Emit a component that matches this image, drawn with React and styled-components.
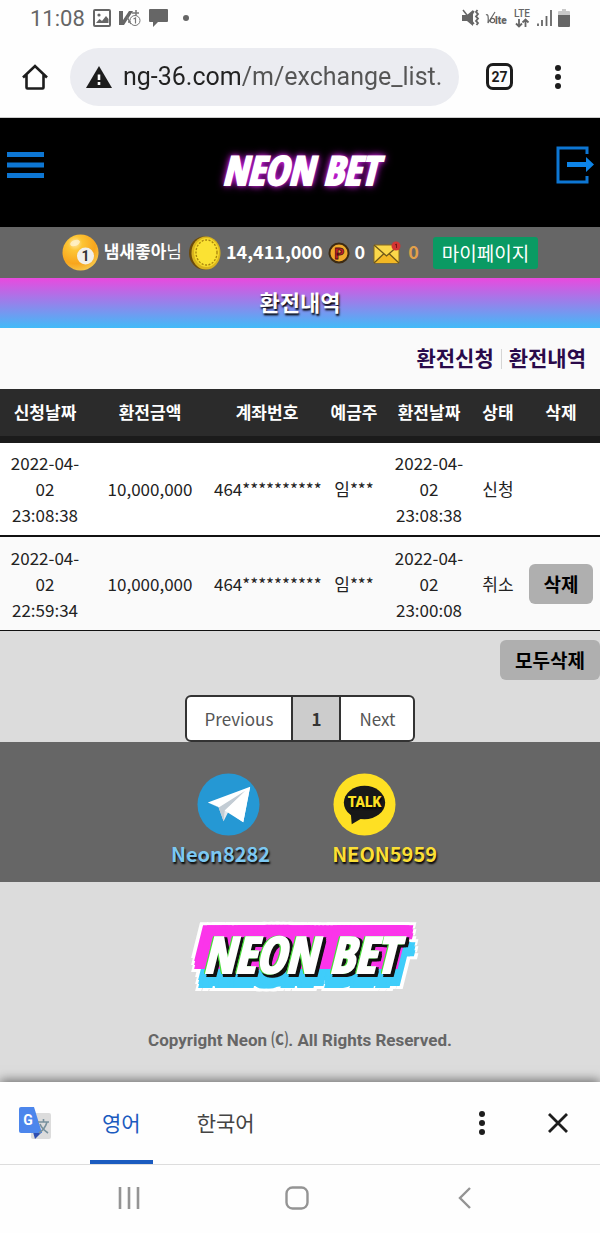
import styled, { createGlobalStyle } from "styled-components";

const rows = [
    { id: 1, date: "2022-04-02 23:08:38", amount: "10,000,000", account: "464**********", owner: "임***", done: "2022-04-02 23:08:38", status: "신청", removable: false },
    { id: 2, date: "2022-04-02 22:59:34", amount: "10,000,000", account: "464**********", owner: "임***", done: "2022-04-02 23:00:08", status: "취소", removable: true },
];

const columns = [
    { label: "신청날짜", width: "15%" },
    { label: "환전금액", width: "20%" },
    { label: "계좌번호", width: "19%" },
    { label: "예금주", width: "10%" },
    { label: "환전날짜", width: "15%" },
    { label: "상태", width: "8%" },
    { label: "삭제", width: "13%" },
];

// solid copy of the text, moved by x/y and fattened by r
const layer = (x, y, r, color) =>
    [[0, 0], [-r, 0], [r, 0], [0, -r], [0, r], [-r, -r], [r, -r], [-r, r], [r, r]]
        .map(([dx, dy]) => `${x + dx}px ${y + dy}px 0 ${color}`)
        .join(", ");

const App = () => {
    return (
        <Screen>
            <GlobalStyle />
            <StatusBar />
            <BrowserBar />
            <SiteHeader />
            <UserBar />
            <Main>
                <Title>환전내역</Title>
                <SubNav>
                    <a href="#exchange">환전신청</a>
                    <Divider />
                    <a href="#list">환전내역</a>
                </SubNav>
                <HistoryTable />
                <Actions>
                    <GreyButton type="button">모두삭제</GreyButton>
                </Actions>
                <Pagination>
                    <PageButton type="button">Previous</PageButton>
                    <PageButton type="button" $active>1</PageButton>
                    <PageButton type="button">Next</PageButton>
                </Pagination>
            </Main>
            <Contacts />
            <Footer>
                <FooterLogo>NEON BET</FooterLogo>
                <Copyright>Copyright Neon ⒞. All Rights Reserved.</Copyright>
            </Footer>
            <TranslateBar />
            <PhoneNav />
        </Screen>
    );
};

const StatusBar = () => (
    <Status>
        <Clock>11:08</Clock>
        <svg width="18" height="18" viewBox="0 0 18 18">
            <rect x="1" y="1" width="16" height="16" rx="1" fill="none" stroke="#666" strokeWidth="2" />
            <circle cx="6" cy="6" r="1.6" fill="#666" />
            <path d="M3 14l3.5-4 2.5 2 4-5 2.5 3v4z" fill="#666" />
        </svg>
        <svg width="22" height="18" viewBox="0 0 22 18">
            <path d="M0 2h4v9l6-9h4L5 16H0z" fill="#666" />
            <path d="M13 4h7M17 1v6M8 8l4 7M9 13h4" stroke="#777" strokeWidth="1.5" fill="none" />
            <circle cx="16" cy="11.500" r="5" fill="#fff" stroke="#777" />
            <path d="M14.500 10l2-1v5.500" stroke="#777" strokeWidth="1.200" fill="none" />
        </svg>
        <svg width="19" height="18" viewBox="0 0 19 18">
            <path d="M1 0h17a1 1 0 0 1 1 1v11a1 1 0 0 1-1 1H9l-5 5v-5H1a1 1 0 0 1-1-1V1a1 1 0 0 1 1-1z" fill="#666" />
        </svg>
        <Dot />
        <Signals>
            <svg width="19" height="18" viewBox="0 0 19 18">
                <path d="M1 6h5l6-5v16l-6-5H1z" fill="#666" />
                <path d="M2 1l11 14" stroke="#666" strokeWidth="1.500" />
                <path d="M10 7l3-5" stroke="#666" strokeWidth="1.500" />
                <path d="M16.500 1l-1.500 2 2 2-2 2.500 2 2-2 2.500 2 2-1.500 2" fill="none" stroke="#666" strokeWidth="1.800" />
            </svg>
            <svg width="23" height="18" viewBox="0 0 23 18">
                <path d="M1 6q3-2 2 8L10 3" fill="none" stroke="#666" strokeWidth="1.200" />
                <circle cx="7.500" cy="11.500" r="2.200" fill="none" stroke="#666" strokeWidth="1.200" />
                <text x="10" y="15" fontFamily="Roboto, sans-serif" fontWeight="900" fontSize="10" fill="#666">lte</text>
            </svg>
            <svg width="18" height="20" viewBox="0 0 18 20">
                <text x="9" y="9" textAnchor="middle" fontFamily="Roboto, sans-serif" fontWeight="500" fontSize="10" fill="#666">LTE</text>
                <path d="M6 11v7M3 15.500l3 3 3-3M12.500 19v-7M9.500 14.500l3-3 3 3" fill="none" stroke="#666" strokeWidth="1.800" />
            </svg>
            <svg width="17" height="18" viewBox="0 0 17 18">
                <path d="M2 14.500V17M6 11v6M10.500 7v10M15 1v16" stroke="#666" strokeWidth="1.800" />
            </svg>
            <svg width="12" height="18" viewBox="0 0 12 18">
                <path d="M4 0h4v2h3a1 1 0 0 1 1 1v4H0V3a1 1 0 0 1 1-1h3z" fill="#c9c9c9" />
                <path d="M0 6h12v11a1 1 0 0 1-1 1H1a1 1 0 0 1-1-1z" fill="#666" />
            </svg>
        </Signals>
    </Status>
);

const BrowserBar = () => (
    <Browser>
        <IconButton type="button" aria-label="Home">
            <svg width="28" height="28" viewBox="0 0 28 28" fill="none" stroke="#1d1d1d" strokeWidth="2.600">
                <path d="M2 14.500L14 3l12 11.500M5.500 12v12.500a1 1 0 0 0 1 1h15a1 1 0 0 0 1-1V12" />
            </svg>
        </IconButton>
        <Address>
            <svg width="26" height="24" viewBox="0 0 26 24">
                <path d="M13 1l13 22H0z" fill="#1d1d1d" />
                <path d="M13 9.500v5.500M13 17v3" stroke="#fff" strokeWidth="2.600" />
            </svg>
            <AddressInput type="text" aria-label="Address" defaultValue="ng-36.com/m/exchange_list." />
        </Address>
        <TabCount type="button">27</TabCount>
        <IconButton type="button" aria-label="Menu">
            <MoreIcon />
        </IconButton>
    </Browser>
);

const MoreIcon = () => (
    <svg width="28" height="28" viewBox="0 0 28 28" fill="#1d1d1d">
        <circle cx="14" cy="5" r="3" />
        <circle cx="14" cy="14" r="3" />
        <circle cx="14" cy="23" r="3" />
    </svg>
);

const SiteHeader = () => (
    <Header>
        <IconButton type="button" aria-label="메뉴">
            <svg width="38" height="28" viewBox="0 0 38 28" fill="#0d76d3">
                <path d="M1 1h37v5H1zM1 11.500h37v5H1zM1 22h37v5H1z" />
            </svg>
        </IconButton>
        <HeaderLogo href="#home">NEON BET</HeaderLogo>
        <IconButton type="button" aria-label="로그아웃">
            <svg width="38" height="38" viewBox="0 0 38 38">
                <path d="M31 8V2H2v34h29v-6" fill="none" stroke="#0d76d3" strokeWidth="3" />
                <path d="M11 16h19v-5l8 7.500-8 7.500v-5H11z" fill="#0d84e8" />
            </svg>
        </IconButton>
    </Header>
);

const UserBar = () => (
    <User>
        <svg width="37" height="37" viewBox="0 0 37 37">
            <defs>
                <radialGradient id="ball" cx="0.35" cy="0.25" r="0.8">
                    <stop offset="0" stopColor="#ffe9a8" />
                    <stop offset="0.25" stopColor="#fdc534" />
                    <stop offset="0.7" stopColor="#f8a51d" />
                    <stop offset="1" stopColor="#f7c94c" />
                </radialGradient>
            </defs>
            <circle cx="18.500" cy="18.500" r="18" fill="url(#ball)" />
            <ellipse cx="13" cy="9" rx="5" ry="3" fill="#fff3cf" opacity="0.8" transform="rotate(-20 13 9)" />
            <circle cx="23.500" cy="22" r="8.500" fill="#f1efe9" />
            <text x="23.500" y="27" textAnchor="middle" fontFamily="Roboto, sans-serif" fontWeight="700" fontSize="14" fill="#333">1</text>
        </svg>
        <Name><b>냄새좋아</b>님</Name>
        <svg width="32" height="36" viewBox="0 0 32 36">
            <ellipse cx="15" cy="18" rx="15" ry="16.500" fill="#6b4a0c" />
            <ellipse cx="17" cy="18" rx="14.500" ry="16.500" fill="#d9b41e" />
            <ellipse cx="17.500" cy="17.500" rx="12.500" ry="14.500" fill="#f5d92b" />
            <ellipse cx="17.500" cy="17.500" rx="10.500" ry="12.500" fill="#fbe233" stroke="#a8830f" strokeWidth="1.300" strokeDasharray="2 1.500" />
        </svg>
        <Amount>14,411,000</Amount>
        <svg width="22" height="22" viewBox="0 0 22 22">
            <circle cx="11" cy="11" r="9.500" fill="#f0a92c" stroke="#3d2a12" strokeWidth="2" />
            <text x="11.500" y="16.500" textAnchor="middle" fontFamily="Roboto, sans-serif" fontWeight="900" fontSize="15" fill="#c8202a" stroke="#4a1014" strokeWidth="0.800">P</text>
        </svg>
        <Amount>0</Amount>
        <MailIcon width="28" height="24" viewBox="0 0 28 24">
            <rect x="1" y="4" width="25" height="18" rx="1" fill="#fbd84a" stroke="#8a6a1c" />
            <path d="M1 22l10-9 2.500 2 2.500-2 10 9z" fill="#f3b824" />
            <path d="M1 4l12.500 11L26 4M1 22l9.500-9M26 22l-9.500-9" fill="none" stroke="#6f5718" strokeWidth="1.300" />
            <circle cx="23" cy="5" r="4.500" fill="#d33434" />
            <path d="M22 4l1.500-1v4" fill="none" stroke="#7a1818" />
        </MailIcon>
        <Notes>0</Notes>
        <MyPage href="#mypage">마이페이지</MyPage>
    </User>
);

const HistoryTable = () => (
    <Table>
        <thead>
            <tr>
                {columns.map((col) => (
                    <Head key={col.label} $width={col.width} scope="col">{col.label}</Head>
                ))}
            </tr>
        </thead>
        <tbody>
            {rows.map((row) => (
                <Row key={row.id}>
                    <Cell>{row.date}</Cell>
                    <Cell>{row.amount}</Cell>
                    <Cell>{row.account}</Cell>
                    <Cell>{row.owner}</Cell>
                    <Cell>{row.done}</Cell>
                    <Cell>{row.status}</Cell>
                    <Cell>{row.removable && <GreyButton type="button">삭제</GreyButton>}</Cell>
                </Row>
            ))}
        </tbody>
    </Table>
);

const Contacts = () => (
    <ContactBar>
        <Contact href="#telegram" $color="#7cc8f2" $align="flex-end">
            <ContactIcon viewBox="0 0 64 64">
                <circle cx="32" cy="32" r="31.500" fill="#2598d4" />
                <path d="M11 30L54 14l-7 36-17-12z" fill="#fff" />
                <path d="M11 30l11 5 5 14 5-10z" fill="#e4e8ec" />
                <path d="M22 35l27-17-21 21-1 10z" fill="#c3ccd4" />
                <path d="M28 38L54 14l-7 36z" fill="#fff" />
            </ContactIcon>
            Neon8282
        </Contact>
        <Contact href="#kakao" $color="#fbdf35" $align="flex-start">
            <ContactIcon viewBox="0 0 64 64">
                <circle cx="32" cy="32" r="31.500" fill="#fee023" />
                <ellipse cx="32" cy="30" rx="21" ry="17" fill="#181818" />
                <path d="M18 40l1 12 12-7z" fill="#181818" />
                <text x="32" y="35" textAnchor="middle" fontFamily="Roboto, sans-serif" fontWeight="900" fontSize="14" fill="#fee023">TALK</text>
            </ContactIcon>
            NEON5959
        </Contact>
    </ContactBar>
);

const TranslateBar = () => (
    <Translate>
        <svg width="34" height="34" viewBox="0 0 34 34">
            <rect x="13" y="7" width="20" height="26" rx="2" fill="#dcdcdc" />
            <path d="M17 33l7-7h-9z" fill="#2f4fb0" />
            <path d="M3 1h13l8 26H3a2 2 0 0 1-2-2V3a2 2 0 0 1 2-2z" fill="#4c86ec" />
            <text x="10" y="19" textAnchor="middle" fontFamily="Roboto, sans-serif" fontWeight="700" fontSize="14" fill="#fff">G</text>
            <path d="M20 16h11M25.500 13v3M29 16q-2 7-8 11M22 18q2 5 8 9" stroke="#77909c" strokeWidth="1.600" fill="none" />
        </svg>
        <Tab type="button" $active>영어</Tab>
        <Tab type="button">한국어</Tab>
        <TranslateTools>
            <IconButton type="button" aria-label="More">
                <MoreIcon />
            </IconButton>
            <IconButton type="button" aria-label="Close">
                <svg width="24" height="24" viewBox="0 0 24 24">
                    <path d="M3 3l18 18M21 3L3 21" stroke="#1d1d1d" strokeWidth="2.800" />
                </svg>
            </IconButton>
        </TranslateTools>
    </Translate>
);

const PhoneNav = () => (
    <Nav>
        <IconButton type="button" aria-label="Recent apps">
            <svg width="24" height="24" viewBox="0 0 24 24">
                <path d="M3 1v22M12 1v22M21 1v22" stroke="#949494" strokeWidth="2.600" />
            </svg>
        </IconButton>
        <IconButton type="button" aria-label="Home screen">
            <svg width="24" height="24" viewBox="0 0 24 24">
                <rect x="1.500" y="1.500" width="21" height="21" rx="6" fill="none" stroke="#949494" strokeWidth="2.400" />
            </svg>
        </IconButton>
        <IconButton type="button" aria-label="Back">
            <svg width="24" height="24" viewBox="0 0 24 24">
                <path d="M17 2L7 12l10 10" fill="none" stroke="#949494" strokeWidth="2.400" />
            </svg>
        </IconButton>
    </Nav>
);

const GlobalStyle = createGlobalStyle`
* {
    box-sizing: border-box;
}

body {
    margin: 0;
    background: #fefefe;
    font-family: "Noto Sans CJK KR", sans-serif;
}

button {
    font-family: inherit;
    cursor: pointer;
}

a {
    text-decoration: none;
}

svg {
    flex-shrink: 0;
}
`;

const Screen = styled.div`
display: flex;
flex-direction: column;
min-height: 100vh;
background: #dcdcdc;
`;

const Status = styled.div`
display: flex;
align-items: center;
gap: 8px;
height: 36px;
padding: 0 30px;
background: #fefefe;
`;

const Clock = styled.span`
color: #666;
font-family: Roboto, sans-serif;
font-size: 22px;
`;

const Dot = styled.span`
width: 6px;
height: 6px;
margin-left: 7px;
border-radius: 50%;
background: #666;
`;

const Signals = styled.div`
display: flex;
align-items: center;
gap: 5px;
margin-left: auto;
`;

const Browser = styled.div`
display: flex;
align-items: center;
height: 82px;
padding: 0 28px 0 21px;
border-bottom: 1px solid #ccc;
background: #fefefe;
`;

const IconButton = styled.button`
display: flex;
flex-shrink: 0;
padding: 0;
border: 0;
background: none;
`;

const Address = styled.div`
display: flex;
align-items: center;
flex: 1;
gap: 11px;
height: 58px;
min-width: 0;
margin: 0 27px 0 21px;
padding: 0 8px 0 16px;
border-radius: 29px;
background: #ebecf1;
`;

const AddressInput = styled.input`
flex: 1;
min-width: 0;
padding: 0;
border: 0;
outline: 0;
background: linear-gradient(90deg, #222 118px, #555 118px);
background-clip: text;
color: transparent;
font-family: Roboto, sans-serif;
font-size: 25px;
line-height: 36px;
`;

const TabCount = styled.button`
flex-shrink: 0;
width: 27px;
height: 27px;
margin-right: 31px;
padding: 0;
border: 3px solid #1d1d1d;
border-radius: 7px;
background: none;
color: #1d1d1d;
font-family: Roboto, sans-serif;
font-size: 14px;
font-weight: 700;
line-height: 20px;
`;

const Header = styled.header`
display: flex;
align-items: center;
justify-content: space-between;
height: 109px;
padding: 0 6px 16px;
background: #000;
`;

const HeaderLogo = styled.a`
padding-top: 10px;
color: #fff;
font-family: "Open Sans Condensed", "Roboto Condensed", sans-serif;
font-size: 40px;
font-style: italic;
font-weight: 700;
line-height: 60px;
-webkit-text-stroke: 2px #fff;
text-shadow: 0 0 3px #e93af5, 0 0 6px #d21fe6, 0 0 10px #d21fe6;
`;

const User = styled.div`
display: flex;
align-items: center;
justify-content: center;
gap: 5px;
height: 51px;
background: #666;
color: #fff;
font-size: 17px;
`;

const Name = styled.span`
margin-right: 2px;
padding-bottom: 4px;
`;

const Amount = styled.b`
padding-bottom: 4px;
font-size: 18px;
`;

const MailIcon = styled.svg`
margin-left: 3px;
`;

const Notes = styled(Amount)`
margin: 0 9px 0 2px;
color: #e2a04a;
`;

const MyPage = styled.a`
padding: 0 9px;
border-radius: 3px;
background: #0a9a63;
color: #fff;
font-size: 19px;
line-height: 32px;
`;

const Main = styled.main`
background: #dcdcdc;
`;

const Title = styled.h1`
margin: 0;
padding-bottom: 4px;
background: linear-gradient(#ea49de, #41bbf8);
color: #fff;
font-size: 22px;
line-height: 46px;
text-align: center;
text-shadow: 1px 2px 2px #000;
`;

const SubNav = styled.nav`
display: flex;
align-items: center;
justify-content: flex-end;
gap: 7px;
height: 61px;
padding: 0 14px 4px;
background: #fafafa;

a {
    color: #2a0a4a;
    font-size: 21px;
    font-weight: 700;
}
`;

const Divider = styled.span`
width: 1px;
height: 20px;
margin-top: 4px;
background: #d5d5d5;
`;

const Table = styled.table`
width: 100%;
table-layout: fixed;
border-collapse: separate;
border-spacing: 0;
font-size: 17px;
line-height: 26px;
`;

const Head = styled.th`
width: ${(props) => props.$width};
height: 54px;
padding: 0 0 2px;
border-bottom: 7px solid #1b1b1b;
background: #2b2b2b;
color: #fff;
font-weight: 700;
`;

const Row = styled.tr`
background: #fff;

&:nth-child(even) {
    background: #fafafa;
}
`;

const Cell = styled.td`
height: 94px;
padding: 0 4px;
border-bottom: 1px solid #111;
color: #222;
text-align: center;

${Row}:first-child & {
    border-bottom-width: 2px;
}
`;

const GreyButton = styled.button`
padding: 0 15px;
border: 0;
border-radius: 6px;
background: #afafaf;
color: #000;
font-size: 19px;
font-weight: 700;
line-height: 40px;
`;

const Actions = styled.div`
display: flex;
justify-content: flex-end;
padding: 9px 0 15px;
`;

const Pagination = styled.div`
display: flex;
justify-content: center;
`;

const PageButton = styled.button`
padding: 0 18px;
border: 2px solid #333;
border-left-width: 0;
background: ${(props) => (props.$active ? "#ccc" : "#fff")};
color: ${(props) => (props.$active ? "#333" : "#555")};
font-size: 17px;
font-weight: ${(props) => (props.$active ? 700 : 400)};
line-height: 43px;

&:first-child {
    border-left-width: 2px;
    border-radius: 6px 0 0 6px;
}

&:last-child {
    border-radius: 0 6px 6px 0;
}
`;

const ContactBar = styled.section`
display: flex;
justify-content: center;
gap: 62px;
height: 140px;
padding: 31px 0 0 8px;
background: #666;
`;

const Contact = styled.a`
display: flex;
flex-direction: column;
align-items: ${(props) => props.$align};
color: ${(props) => props.$color};
font-size: 20px;
font-weight: 700;
line-height: 36px;
text-shadow: 1px 2px 2px #000;
`;

const ContactIcon = styled.svg`
width: 63px;
height: 63px;
margin: 0 10px 0 1px;
`;

const Footer = styled.footer`
display: flex;
flex: 1;
flex-direction: column;
align-items: center;
padding: 30px 0;
background: #dcdcdc;
`;

const FooterLogo = styled.div`
color: #fff;
font-family: "Open Sans Condensed", "Roboto Condensed", sans-serif;
font-size: 50px;
font-style: italic;
font-weight: 700;
line-height: 84px;
-webkit-text-stroke: 2px #fff;
text-shadow:
    ${layer(-1, 0, 1, "#4bdc3c")},
    ${layer(2, 2, 2, "#111")},
    ${layer(-8, -8, 4, "#fb35ea")},
    ${layer(4, -8, 4, "#fb35ea")},
    ${layer(-4, 11, 4, "#3fcdfa")},
    ${layer(6, 9, 4, "#3fcdfa")},
    ${layer(-8, -8, 7, "#fff")},
    ${layer(4, -8, 7, "#fff")},
    ${layer(-4, 11, 7, "#fff")},
    ${layer(6, 9, 7, "#fff")};
`;

const Copyright = styled.p`
margin: 32px 0 0;
color: #666;
font-family: Roboto, "Noto Sans CJK KR", sans-serif;
font-size: 17px;
font-weight: 700;
line-height: 24px;
`;

const Translate = styled.div`
display: flex;
align-items: center;
height: 83px;
padding: 0 30px 0 18px;
border-bottom: 1px solid #ddd;
background: #fefefe;
box-shadow: 0 -2px 10px rgba(0, 0, 0, 0.5);
`;

const Tab = styled.button`
align-self: stretch;
margin-left: ${(props) => (props.$active ? "38px" : "32px")};
padding: 2px 12px 0;
border: 0;
border-bottom: 4px solid ${(props) => (props.$active ? "#1b5bbf" : "transparent")};
background: none;
color: ${(props) => (props.$active ? "#1b5bbf" : "#444")};
font-size: 21px;
`;

const TranslateTools = styled.div`
display: flex;
align-items: center;
gap: 50px;
margin-left: auto;
`;

const Nav = styled.nav`
display: flex;
align-items: center;
justify-content: center;
gap: 144px;
height: 69px;
padding: 0 7px 3px 0;
background: #fefefe;
`;

export default App;
